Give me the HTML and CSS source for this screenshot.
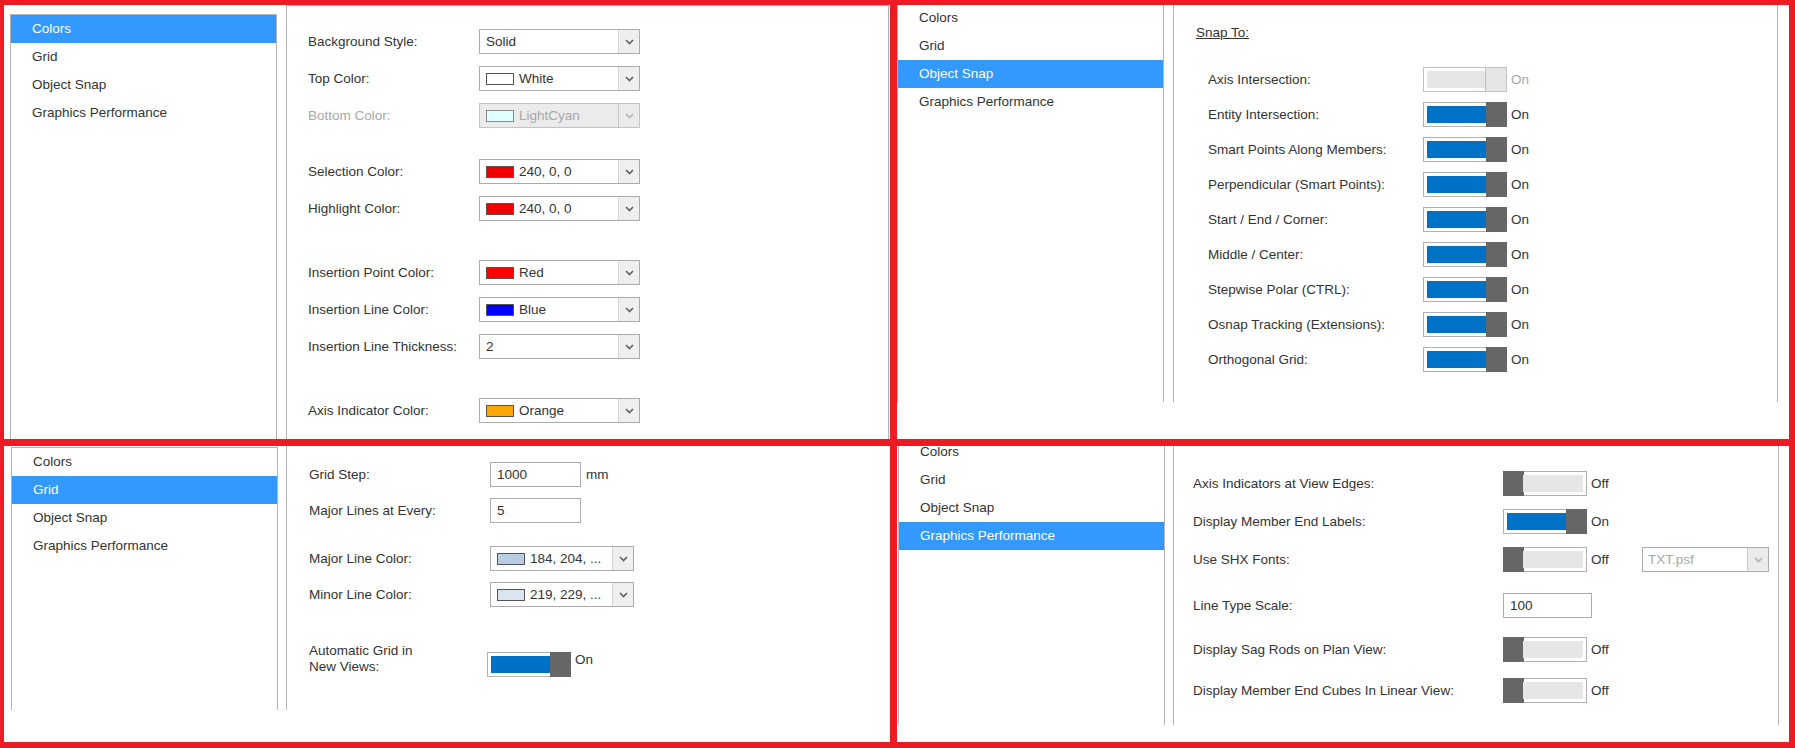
FILE: index.html
```html
<!DOCTYPE html>
<html lang="en">
<head>
  <meta charset="UTF-8" />
  <title>Options</title>
  <link rel="stylesheet" href="styles.css">
</head>
<body>
  <div class="sheet">

    <!-- Colors page -->
    <section class="shot shot-colors">
      <ul class="nav">
        <li class="active">Colors</li>
        <li>Grid</li>
        <li>Object Snap</li>
        <li>Graphics Performance</li>
      </ul>
      <div class="page">
        <div class="field"><label>Background Style:</label>
          <div class="combo"><span class="combo-value">Solid</span><span class="combo-btn"><svg width="9" height="6" viewBox="0 0 9 6"><path d="M1 1 L4.5 4.5 L8 1" /></svg></span></div>
        </div>
        <div class="field"><label>Top Color:</label>
          <div class="combo"><span class="combo-value"><i class="swatch" style="background:#ffffff"></i>White</span><span class="combo-btn"><svg width="9" height="6" viewBox="0 0 9 6"><path d="M1 1 L4.5 4.5 L8 1" /></svg></span></div>
        </div>
        <div class="field disabled"><label class="muted">Bottom Color:</label>
          <div class="combo"><span class="combo-value"><i class="swatch" style="background:#e0ffff"></i>LightCyan</span><span class="combo-btn"><svg width="9" height="6" viewBox="0 0 9 6"><path d="M1 1 L4.5 4.5 L8 1" /></svg></span></div>
        </div>

        <div class="field mt-31"><label>Selection Color:</label>
          <div class="combo"><span class="combo-value"><i class="swatch" style="background:#f00000"></i>240, 0, 0</span><span class="combo-btn"><svg width="9" height="6" viewBox="0 0 9 6"><path d="M1 1 L4.5 4.5 L8 1" /></svg></span></div>
        </div>
        <div class="field"><label>Highlight Color:</label>
          <div class="combo"><span class="combo-value"><i class="swatch" style="background:#f00000"></i>240, 0, 0</span><span class="combo-btn"><svg width="9" height="6" viewBox="0 0 9 6"><path d="M1 1 L4.5 4.5 L8 1" /></svg></span></div>
        </div>

        <div class="field mt-39"><label>Insertion Point Color:</label>
          <div class="combo"><span class="combo-value"><i class="swatch" style="background:#ff0000"></i>Red</span><span class="combo-btn"><svg width="9" height="6" viewBox="0 0 9 6"><path d="M1 1 L4.5 4.5 L8 1" /></svg></span></div>
        </div>
        <div class="field"><label>Insertion Line Color:</label>
          <div class="combo"><span class="combo-value"><i class="swatch" style="background:#0000ff"></i>Blue</span><span class="combo-btn"><svg width="9" height="6" viewBox="0 0 9 6"><path d="M1 1 L4.5 4.5 L8 1" /></svg></span></div>
        </div>
        <div class="field"><label>Insertion Line Thickness:</label>
          <div class="combo"><span class="combo-value">2</span><span class="combo-btn"><svg width="9" height="6" viewBox="0 0 9 6"><path d="M1 1 L4.5 4.5 L8 1" /></svg></span></div>
        </div>

        <div class="field mt-39"><label>Axis Indicator Color:</label>
          <div class="combo"><span class="combo-value"><i class="swatch" style="background:#ffa500"></i>Orange</span><span class="combo-btn"><svg width="9" height="6" viewBox="0 0 9 6"><path d="M1 1 L4.5 4.5 L8 1" /></svg></span></div>
        </div>
      </div>
    </section>

    <!-- Object Snap page -->
    <section class="shot shot-snap">
      <ul class="nav">
        <li>Colors</li>
        <li>Grid</li>
        <li class="active">Object Snap</li>
        <li>Graphics Performance</li>
      </ul>
      <div class="page">
        <div class="snap-title">Snap To:</div>
        <div class="snap-list">
          <div class="field disabled"><label>Axis Intersection:</label>
            <span class="toggle on"><span class="fill"></span><span class="thumb"></span></span><span class="state">On</span></div>
          <div class="field"><label>Entity Intersection:</label>
            <span class="toggle on"><span class="fill"></span><span class="thumb"></span></span><span class="state">On</span></div>
          <div class="field"><label>Smart Points Along Members:</label>
            <span class="toggle on"><span class="fill"></span><span class="thumb"></span></span><span class="state">On</span></div>
          <div class="field"><label>Perpendicular (Smart Points):</label>
            <span class="toggle on"><span class="fill"></span><span class="thumb"></span></span><span class="state">On</span></div>
          <div class="field"><label>Start / End / Corner:</label>
            <span class="toggle on"><span class="fill"></span><span class="thumb"></span></span><span class="state">On</span></div>
          <div class="field"><label>Middle / Center:</label>
            <span class="toggle on"><span class="fill"></span><span class="thumb"></span></span><span class="state">On</span></div>
          <div class="field"><label>Stepwise Polar (CTRL):</label>
            <span class="toggle on"><span class="fill"></span><span class="thumb"></span></span><span class="state">On</span></div>
          <div class="field"><label>Osnap Tracking (Extensions):</label>
            <span class="toggle on"><span class="fill"></span><span class="thumb"></span></span><span class="state">On</span></div>
          <div class="field"><label>Orthogonal Grid:</label>
            <span class="toggle on"><span class="fill"></span><span class="thumb"></span></span><span class="state">On</span></div>
        </div>
      </div>
    </section>

    <!-- Grid page -->
    <section class="shot shot-grid">
      <ul class="nav">
        <li>Colors</li>
        <li class="active">Grid</li>
        <li>Object Snap</li>
        <li>Graphics Performance</li>
      </ul>
      <div class="page">
        <div class="field"><label>Grid Step:</label>
          <input class="text" type="text" value="1000"><span class="unit">mm</span></div>
        <div class="field"><label>Major Lines at Every:</label>
          <input class="text" type="text" value="5"></div>

        <div class="field mt-23"><label>Major Line Color:</label>
          <div class="combo"><span class="combo-value"><i class="swatch" style="background:#b8cce4"></i>184, 204, ...</span><span class="combo-btn"><svg width="9" height="6" viewBox="0 0 9 6"><path d="M1 1 L4.5 4.5 L8 1" /></svg></span></div>
        </div>
        <div class="field"><label>Minor Line Color:</label>
          <div class="combo"><span class="combo-value"><i class="swatch" style="background:#dbe5f1"></i>219, 229, ...</span><span class="combo-btn"><svg width="9" height="6" viewBox="0 0 9 6"><path d="M1 1 L4.5 4.5 L8 1" /></svg></span></div>
        </div>

        <div class="field two-line"><label>Automatic Grid in<br>New Views:</label>
          <span class="toggle on"><span class="fill"></span><span class="thumb"></span></span><span class="state">On</span></div>
      </div>
    </section>

    <!-- Graphics Performance page -->
    <section class="shot shot-perf">
      <ul class="nav">
        <li>Colors</li>
        <li>Grid</li>
        <li>Object Snap</li>
        <li class="active">Graphics Performance</li>
      </ul>
      <div class="page">
        <div class="field"><label>Axis Indicators at View Edges:</label>
          <span class="toggle off"><span class="thumb"></span><span class="fill"></span></span><span class="state">Off</span></div>
        <div class="field"><label>Display Member End Labels:</label>
          <span class="toggle on"><span class="fill"></span><span class="thumb"></span></span><span class="state">On</span></div>
        <div class="field"><label>Use SHX Fonts:</label>
          <span class="toggle off"><span class="thumb"></span><span class="fill"></span></span><span class="state wide">Off</span>
          <div class="combo combo-font disabled"><span class="combo-value">TXT.psf</span><span class="combo-btn"><svg width="9" height="6" viewBox="0 0 9 6"><path d="M1 1 L4.5 4.5 L8 1" /></svg></span></div>
        </div>
        <div class="field mt-21"><label>Line Type Scale:</label>
          <input class="text text-scale" type="text" value="100"></div>
        <div class="field mt-19"><label>Display Sag Rods on Plan View:</label>
          <span class="toggle off"><span class="thumb"></span><span class="fill"></span></span><span class="state">Off</span></div>
        <div class="field mt-16"><label>Display Member End Cubes In Linear View:</label>
          <span class="toggle off"><span class="thumb"></span><span class="fill"></span></span><span class="state">Off</span></div>
      </div>
    </section>

  </div>
</body>
</html>
```

FILE: styles.css
```css
* { box-sizing: border-box; }
body { margin: 0; background: #fff; color: #333; font-family: "Liberation Sans", Arial, sans-serif; font-size: 13.5px; }

/* four dialog captures framed in red */
.sheet {
  width: 1795px; height: 748px;
  background: #ed1c24;
  padding: 5px 6px 6px 4px;
  display: grid;
  grid-template-columns: 886px 892px;
  grid-template-rows: 434px 296px;
  gap: 7px;
}
.shot { background: #fff; overflow: hidden; display: flex; align-items: flex-start; }

/* left category list */
.nav { list-style: none; margin: 0; padding: 0; width: 267px; flex: none; border: 1px solid #b4b4b4; border-bottom: 0; }
.nav li { height: 28px; line-height: 28px; padding-left: 21px; white-space: nowrap; }
.nav li.active { background: #3399ff; color: #fff; }

/* right settings page */
.page { flex: none; border: 1px solid #b4b4b4; border-bottom: 0; }

.shot-colors { padding-left: 6px; }
.shot-colors .nav { margin-top: 9px; height: 425px; }
.shot-colors .page { margin-left: 9px; width: 603px; height: 434px; padding: 23px 0 0 21px; }
.shot-colors .field label { width: 171px; }
.shot-colors .field + .field { margin-top: 12px; }

.shot-snap .nav { margin-top: -1px; height: 398px; border-top: 0; }
.shot-snap .page { margin-left: 9px; width: 605px; height: 397px; border-top: 0; padding: 20px 0 0 22px; }
.snap-title { height: 16px; line-height: 16px; text-decoration: underline; }
.snap-list { margin-top: 26px; padding-left: 12px; }
.snap-list .field label { width: 215px; }
.snap-list .field + .field { margin-top: 10px; }

.shot-grid { padding-left: 7px; }
.shot-grid .nav { margin-top: 1px; height: 263px; }
.shot-grid .page { margin-left: 8px; flex: 1; height: 264px; border-top: 0; border-right: 0; padding: 16px 0 0 22px; }
.shot-grid .field label { width: 181px; }
.shot-grid .field + .field { margin-top: 11px; }
.shot-grid .field.two-line { margin-top: 45px; align-items: flex-start; }
.shot-grid .two-line label { line-height: 16px; margin-top: -9px; }
.shot-grid .two-line .toggle { margin-left: -3px; }

.shot-perf { padding-left: 1px; }
.shot-perf .nav { margin-top: -9px; height: 288px; }
.shot-perf .page { margin-left: 8px; width: 606px; height: 279px; border-top: 0; padding: 25px 0 0 19px; }
.shot-perf .field label { width: 310px; }
.shot-perf .field + .field { margin-top: 13px; }

/* extra space between groups of rows */
.page .field.mt-16 { margin-top: 16px; }
.page .field.mt-19 { margin-top: 19px; }
.page .field.mt-21 { margin-top: 21px; }
.page .field.mt-23 { margin-top: 23px; }
.page .field.mt-31 { margin-top: 31px; }
.page .field.mt-39 { margin-top: 39px; }

/* one label + control row */
.field { display: flex; align-items: center; height: 25px; }
.field label { flex: none; white-space: nowrap; }
.field label.muted, .field.disabled .state { color: #a8a8a8; }

/* drop-down */
.combo { display: flex; width: 161px; height: 25px; border: 1px solid #acacac; background: #fff; }
.combo-value { flex: 1; display: flex; align-items: center; gap: 5px; padding-left: 6px; white-space: nowrap; overflow: hidden; }
.combo-btn { width: 21px; flex: none; display: flex; align-items: center; justify-content: center; border-left: 1px solid #d4d4d4; background: #efefef; }
.combo-btn path { fill: none; stroke: #606060; stroke-width: 1.6; }
.swatch { width: 28px; height: 12px; border: 1px solid #555; flex: none; }
.disabled .combo { background: #ebebeb; border-color: #c4c4c4; }
.disabled .combo-value { color: #a8a8a8; }
.disabled .swatch { border-color: #8a8a8a; }
.disabled .combo-btn { background: #ebebeb; border-left-color: #c8c8c8; }
.disabled .combo-btn path { stroke: #b4b4b4; }
.shot-grid .combo { width: 144px; }
.combo-font { width: 127px; }
.combo-font .combo-value { padding-left: 5px; }

/* plain text box */
.text { width: 91px; height: 25px; border: 1px solid #acacac; padding: 0 0 0 6px; font: inherit; color: #333; }
.text-scale { width: 89px; }
.unit { margin-left: 5px; }

/* on / off switch */
.toggle { display: flex; width: 84px; height: 25px; border: 1px solid #b0b0b0; background: #fff; flex: none; }
.toggle .fill { flex: 1; margin: 3px; }
.toggle .thumb { width: 21px; margin: -1px; background: #666; }
.toggle.on .fill { background: #0072c6; margin-right: 0; }
.toggle.off .fill { background: #e6e6e6; margin-left: 0; }
.disabled .toggle { border-color: #c0c0c0; }
.disabled .toggle .fill { background: #e6e6e6; }
.disabled .toggle .thumb { background: #e6e6e6; margin: 0; border-left: 1px solid #bdbdbd; }
.state { margin-left: 4px; }
.state.wide { width: 51px; margin-left: 4px; }
```
